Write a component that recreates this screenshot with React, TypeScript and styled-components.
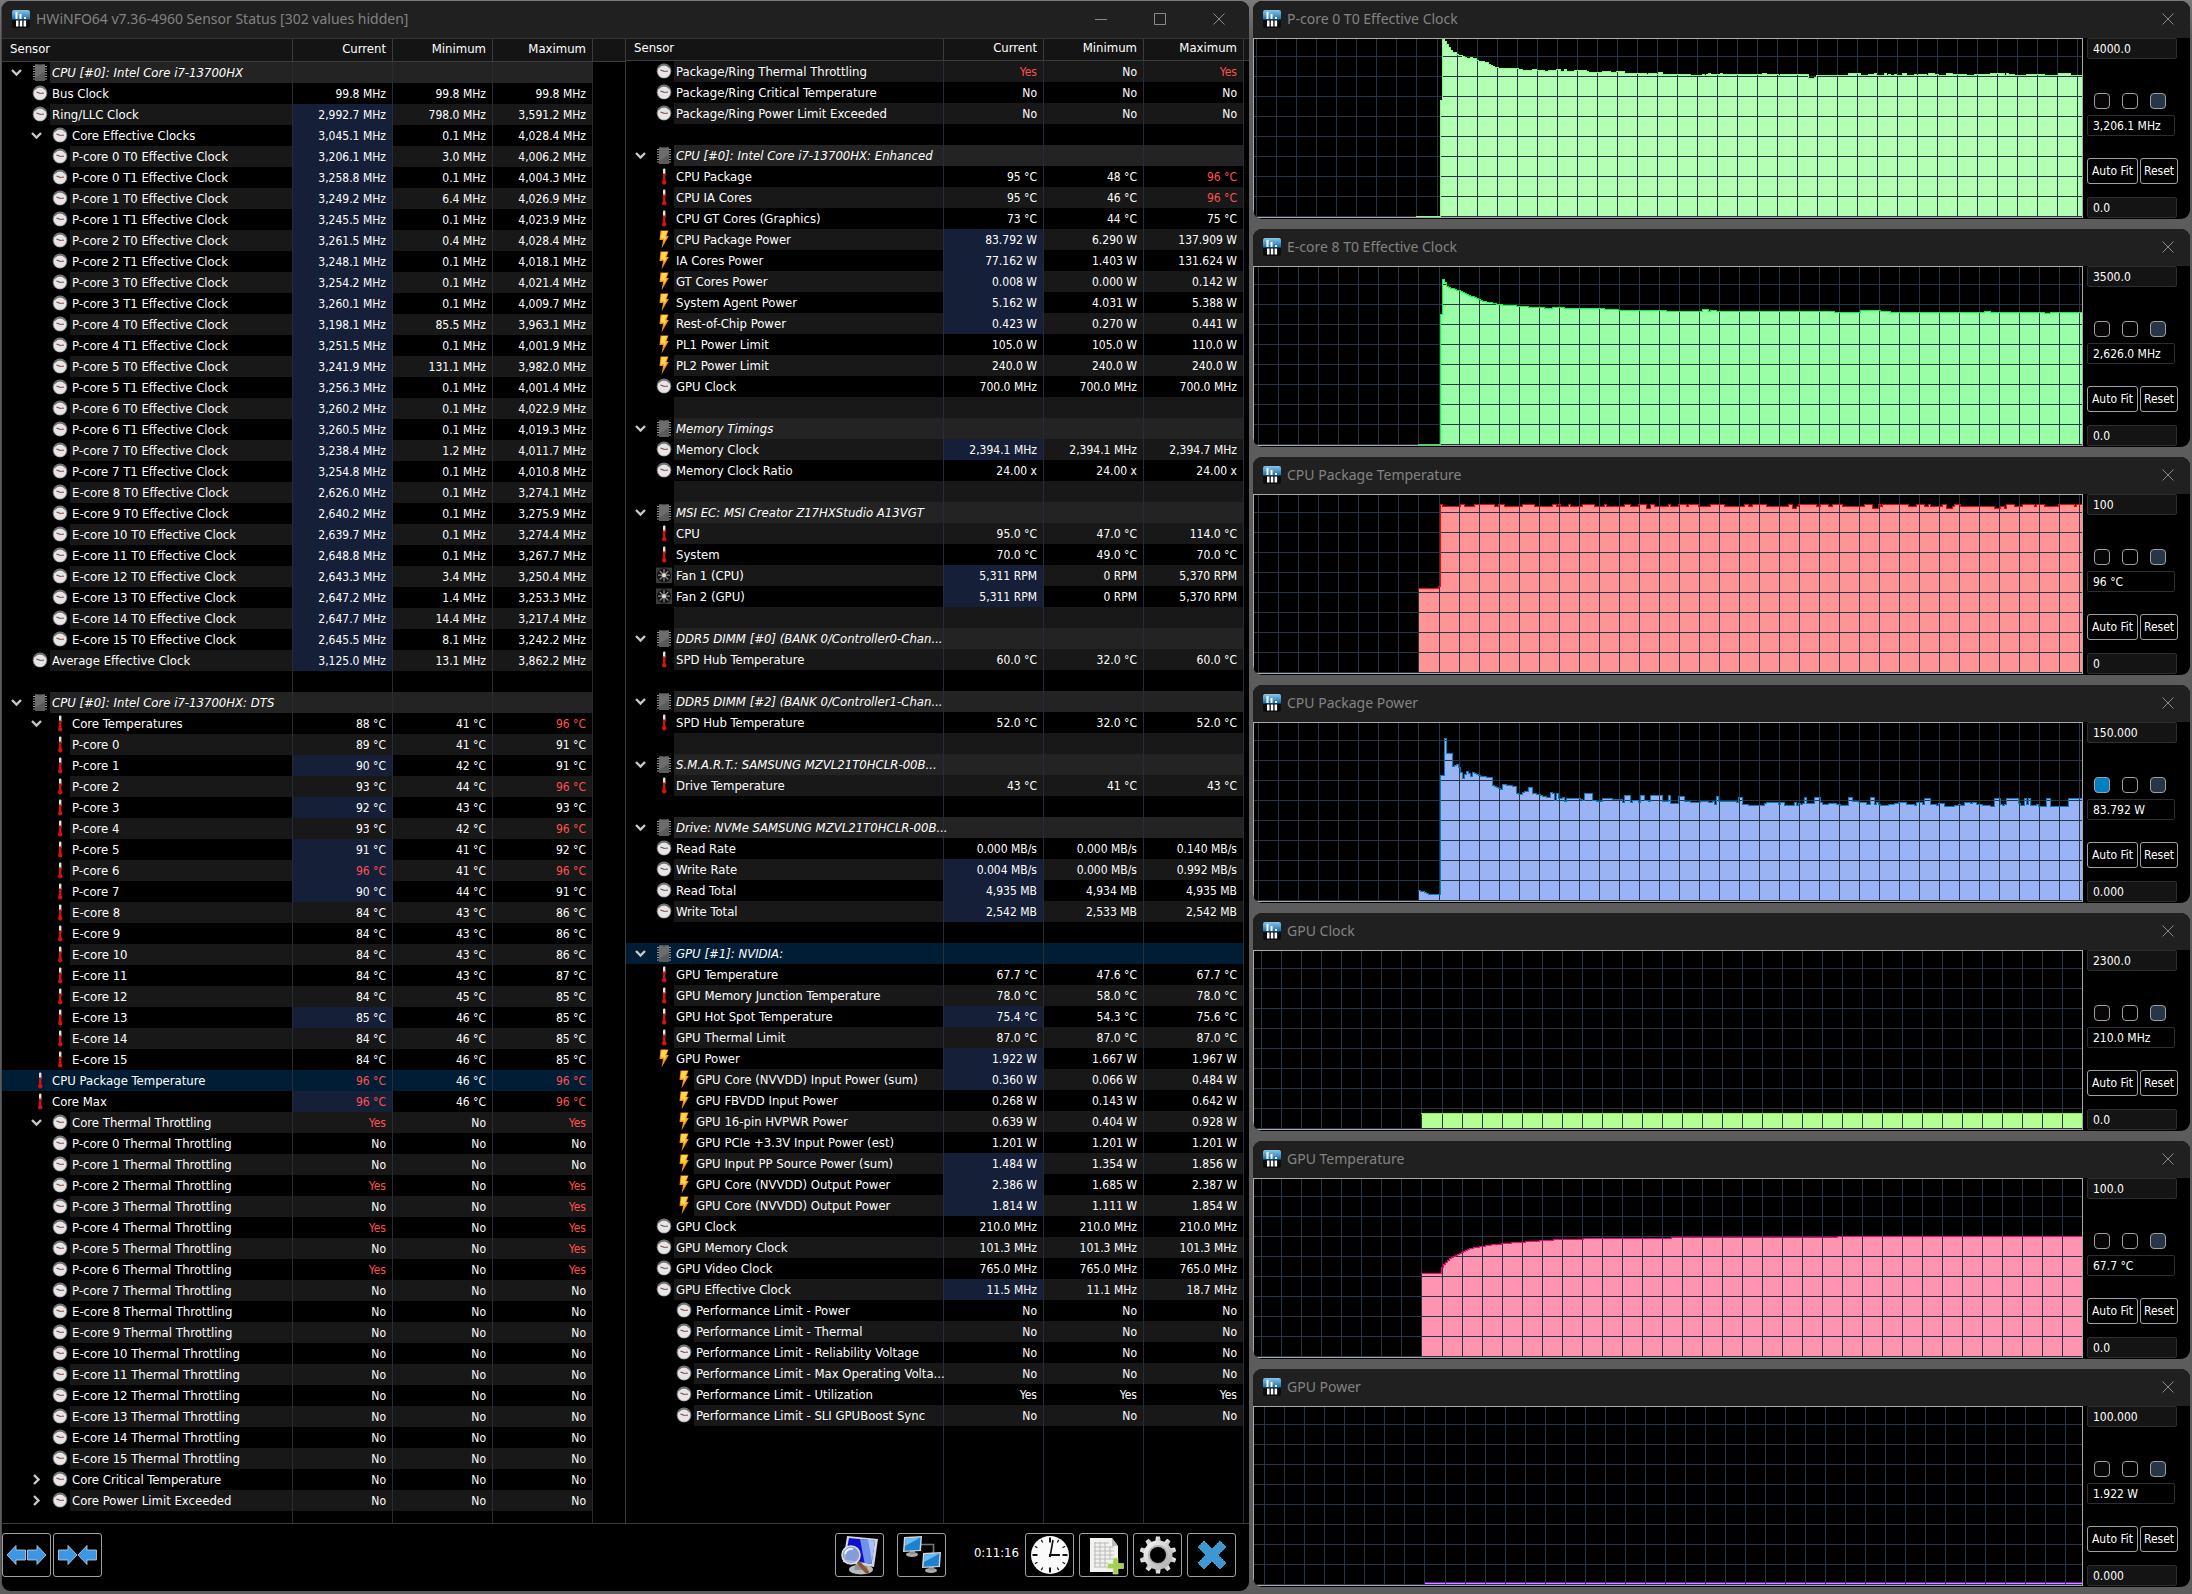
import React, { useId, useState } from 'react';
import styled, { createGlobalStyle, css } from 'styled-components';

const GlobalStyle = createGlobalStyle`
  * { box-sizing: border-box; }
  body {
    margin: 0;
    background: #5c5c5c linear-gradient(#7a7a7a, #5c5c5c 40px);
    color: #fff;
    font: 12px/16px "DejaVu Sans Condensed", "Noto Sans", sans-serif;
  }
  button, input { font: inherit; color: inherit; }
`;

/* ---------- data ---------- */

type IconKind = 'chip' | 'clock' | 'temp' | 'bolt' | 'fan';
type Value = { text: string; alert: boolean };
type RowData = {
  kind: 'blank' | 'group' | 'sensor';
  icon: IconKind;
  level: number;
  chevron: '' | 'open' | 'closed';
  changed: boolean;
  selected: boolean;
  name: string;
  values: Value[];
};

const ICONS: Record<string, IconKind> = { c: 'clock', t: 'temp', b: 'bolt', f: 'fan' };

/*
 * One sensor per line: flags|name|current|minimum|maximum
 *   #  group heading      c t b f  icon       2  indented
 *   v  expanded           >  collapsed        *  value changed
 *   s  selected           !  before a value: over its limit
 */
function parse(source: string): RowData[] {
  return source
    .trim()
    .split('\n')
    .map((line) => {
      const [flags, name = '', ...values] = line.trim().split('|');
      const letter = Object.keys(ICONS).find((k) => flags.includes(k));
      return {
        kind: flags === '-' ? 'blank' : flags.includes('#') ? 'group' : 'sensor',
        icon: letter ? ICONS[letter] : 'chip',
        level: flags.includes('2') ? 1 : 0,
        chevron: flags.includes('#') || flags.includes('v') ? 'open' : flags.includes('>') ? 'closed' : '',
        changed: flags.includes('*'),
        selected: flags.includes('s'),
        name,
        values: values.map((v) => ({ text: v.replace('!', ''), alert: v.startsWith('!') })),
      } as RowData;
    });
}

const LEFT_ROWS = parse(`
#|CPU [#0]: Intel Core i7-13700HX
c|Bus Clock|99.8 MHz|99.8 MHz|99.8 MHz
c*|Ring/LLC Clock|2,992.7 MHz|798.0 MHz|3,591.2 MHz
c2v*|Core Effective Clocks|3,045.1 MHz|0.1 MHz|4,028.4 MHz
c2*|P-core 0 T0 Effective Clock|3,206.1 MHz|3.0 MHz|4,006.2 MHz
c2*|P-core 0 T1 Effective Clock|3,258.8 MHz|0.1 MHz|4,004.3 MHz
c2*|P-core 1 T0 Effective Clock|3,249.2 MHz|6.4 MHz|4,026.9 MHz
c2*|P-core 1 T1 Effective Clock|3,245.5 MHz|0.1 MHz|4,023.9 MHz
c2*|P-core 2 T0 Effective Clock|3,261.5 MHz|0.4 MHz|4,028.4 MHz
c2*|P-core 2 T1 Effective Clock|3,248.1 MHz|0.1 MHz|4,018.1 MHz
c2*|P-core 3 T0 Effective Clock|3,254.2 MHz|0.1 MHz|4,021.4 MHz
c2*|P-core 3 T1 Effective Clock|3,260.1 MHz|0.1 MHz|4,009.7 MHz
c2*|P-core 4 T0 Effective Clock|3,198.1 MHz|85.5 MHz|3,963.1 MHz
c2*|P-core 4 T1 Effective Clock|3,251.5 MHz|0.1 MHz|4,001.9 MHz
c2*|P-core 5 T0 Effective Clock|3,241.9 MHz|131.1 MHz|3,982.0 MHz
c2*|P-core 5 T1 Effective Clock|3,256.3 MHz|0.1 MHz|4,001.4 MHz
c2*|P-core 6 T0 Effective Clock|3,260.2 MHz|0.1 MHz|4,022.9 MHz
c2*|P-core 6 T1 Effective Clock|3,260.5 MHz|0.1 MHz|4,019.3 MHz
c2*|P-core 7 T0 Effective Clock|3,238.4 MHz|1.2 MHz|4,011.7 MHz
c2*|P-core 7 T1 Effective Clock|3,254.8 MHz|0.1 MHz|4,010.8 MHz
c2*|E-core 8 T0 Effective Clock|2,626.0 MHz|0.1 MHz|3,274.1 MHz
c2*|E-core 9 T0 Effective Clock|2,640.2 MHz|0.1 MHz|3,275.9 MHz
c2*|E-core 10 T0 Effective Clock|2,639.7 MHz|0.1 MHz|3,274.4 MHz
c2*|E-core 11 T0 Effective Clock|2,648.8 MHz|0.1 MHz|3,267.7 MHz
c2*|E-core 12 T0 Effective Clock|2,643.3 MHz|3.4 MHz|3,250.4 MHz
c2*|E-core 13 T0 Effective Clock|2,647.2 MHz|1.4 MHz|3,253.3 MHz
c2*|E-core 14 T0 Effective Clock|2,647.7 MHz|14.4 MHz|3,217.4 MHz
c2*|E-core 15 T0 Effective Clock|2,645.5 MHz|8.1 MHz|3,242.2 MHz
c*|Average Effective Clock|3,125.0 MHz|13.1 MHz|3,862.2 MHz
-
#|CPU [#0]: Intel Core i7-13700HX: DTS
t2v|Core Temperatures|88 °C|41 °C|!96 °C
t2|P-core 0|89 °C|41 °C|91 °C
t2*|P-core 1|90 °C|42 °C|91 °C
t2|P-core 2|93 °C|44 °C|!96 °C
t2*|P-core 3|92 °C|43 °C|93 °C
t2|P-core 4|93 °C|42 °C|!96 °C
t2*|P-core 5|91 °C|41 °C|92 °C
t2*|P-core 6|!96 °C|41 °C|!96 °C
t2*|P-core 7|90 °C|44 °C|91 °C
t2|E-core 8|84 °C|43 °C|86 °C
t2|E-core 9|84 °C|43 °C|86 °C
t2|E-core 10|84 °C|43 °C|86 °C
t2|E-core 11|84 °C|43 °C|87 °C
t2|E-core 12|84 °C|45 °C|85 °C
t2*|E-core 13|85 °C|46 °C|85 °C
t2|E-core 14|84 °C|46 °C|85 °C
t2|E-core 15|84 °C|46 °C|85 °C
ts|CPU Package Temperature|!96 °C|46 °C|!96 °C
t*|Core Max|!96 °C|46 °C|!96 °C
c2v|Core Thermal Throttling|!Yes|No|!Yes
c2|P-core 0 Thermal Throttling|No|No|No
c2|P-core 1 Thermal Throttling|No|No|No
c2|P-core 2 Thermal Throttling|!Yes|No|!Yes
c2|P-core 3 Thermal Throttling|No|No|!Yes
c2|P-core 4 Thermal Throttling|!Yes|No|!Yes
c2|P-core 5 Thermal Throttling|No|No|!Yes
c2|P-core 6 Thermal Throttling|!Yes|No|!Yes
c2|P-core 7 Thermal Throttling|No|No|No
c2|E-core 8 Thermal Throttling|No|No|No
c2|E-core 9 Thermal Throttling|No|No|No
c2|E-core 10 Thermal Throttling|No|No|No
c2|E-core 11 Thermal Throttling|No|No|No
c2|E-core 12 Thermal Throttling|No|No|No
c2|E-core 13 Thermal Throttling|No|No|No
c2|E-core 14 Thermal Throttling|No|No|No
c2|E-core 15 Thermal Throttling|No|No|No
c2>|Core Critical Temperature|No|No|No
c2>|Core Power Limit Exceeded|No|No|No
`);

const RIGHT_ROWS = parse(`
c|Package/Ring Thermal Throttling|!Yes|No|!Yes
c|Package/Ring Critical Temperature|No|No|No
c|Package/Ring Power Limit Exceeded|No|No|No
-
#|CPU [#0]: Intel Core i7-13700HX: Enhanced
t|CPU Package|95 °C|48 °C|!96 °C
t|CPU IA Cores|95 °C|46 °C|!96 °C
t|CPU GT Cores (Graphics)|73 °C|44 °C|75 °C
b*|CPU Package Power|83.792 W|6.290 W|137.909 W
b*|IA Cores Power|77.162 W|1.403 W|131.624 W
b*|GT Cores Power|0.008 W|0.000 W|0.142 W
b*|System Agent Power|5.162 W|4.031 W|5.388 W
b*|Rest-of-Chip Power|0.423 W|0.270 W|0.441 W
b|PL1 Power Limit|105.0 W|105.0 W|110.0 W
b|PL2 Power Limit|240.0 W|240.0 W|240.0 W
c|GPU Clock|700.0 MHz|700.0 MHz|700.0 MHz
-
#|Memory Timings
c*|Memory Clock|2,394.1 MHz|2,394.1 MHz|2,394.7 MHz
c|Memory Clock Ratio|24.00 x|24.00 x|24.00 x
-
#|MSI EC: MSI Creator Z17HXStudio A13VGT
t|CPU|95.0 °C|47.0 °C|114.0 °C
t|System|70.0 °C|49.0 °C|70.0 °C
f*|Fan 1 (CPU)|5,311 RPM|0 RPM|5,370 RPM
f*|Fan 2 (GPU)|5,311 RPM|0 RPM|5,370 RPM
-
#|DDR5 DIMM [#0] (BANK 0/Controller0-Chan...
t|SPD Hub Temperature|60.0 °C|32.0 °C|60.0 °C
-
#|DDR5 DIMM [#2] (BANK 0/Controller1-Chan...
t|SPD Hub Temperature|52.0 °C|32.0 °C|52.0 °C
-
#|S.M.A.R.T.: SAMSUNG MZVL21T0HCLR-00B...
t|Drive Temperature|43 °C|41 °C|43 °C
-
#|Drive: NVMe SAMSUNG MZVL21T0HCLR-00B...
c|Read Rate|0.000 MB/s|0.000 MB/s|0.140 MB/s
c*|Write Rate|0.004 MB/s|0.000 MB/s|0.992 MB/s
c*|Read Total|4,935 MB|4,934 MB|4,935 MB
c*|Write Total|2,542 MB|2,533 MB|2,542 MB
-
#s|GPU [#1]: NVIDIA:
t|GPU Temperature|67.7 °C|47.6 °C|67.7 °C
t|GPU Memory Junction Temperature|78.0 °C|58.0 °C|78.0 °C
t*|GPU Hot Spot Temperature|75.4 °C|54.3 °C|75.6 °C
t|GPU Thermal Limit|87.0 °C|87.0 °C|87.0 °C
b*|GPU Power|1.922 W|1.667 W|1.967 W
b2*|GPU Core (NVVDD) Input Power (sum)|0.360 W|0.066 W|0.484 W
b2|GPU FBVDD Input Power|0.268 W|0.143 W|0.642 W
b2|GPU 16-pin HVPWR Power|0.639 W|0.404 W|0.928 W
b2|GPU PCIe +3.3V Input Power (est)|1.201 W|1.201 W|1.201 W
b2*|GPU Input PP Source Power (sum)|1.484 W|1.354 W|1.856 W
b2*|GPU Core (NVVDD) Output Power|2.386 W|1.685 W|2.387 W
b2*|GPU Core (NVVDD) Output Power|1.814 W|1.111 W|1.854 W
c|GPU Clock|210.0 MHz|210.0 MHz|210.0 MHz
c|GPU Memory Clock|101.3 MHz|101.3 MHz|101.3 MHz
c|GPU Video Clock|765.0 MHz|765.0 MHz|765.0 MHz
c*|GPU Effective Clock|11.5 MHz|11.1 MHz|18.7 MHz
c2|Performance Limit - Power|No|No|No
c2|Performance Limit - Thermal|No|No|No
c2|Performance Limit - Reliability Voltage|No|No|No
c2|Performance Limit - Max Operating Volta...|No|No|No
c2|Performance Limit - Utilization|Yes|Yes|Yes
c2|Performance Limit - SLI GPUBoost Sync|No|No|No
`);

type GraphData = {
  title: string;
  top: string;
  value: string;
  bottom: string;
  fill: string;
  line: string;
  start: number;
  points: [number, number][];
  noise?: { size: number; chance: number; up?: boolean };
  lit?: boolean;
};

const GRAPHS: GraphData[] = [
  {
    title: 'P-core 0 T0 Effective Clock', top: '4000.0', value: '3,206.1 MHz', bottom: '0.0',
    fill: '#b3ffb3', line: '#80ff80', start: 162,
    points: [[162, 177], [184, 177], [185, 61], [187, 61], [188, 0], [189, 0], [191, 4], [194, 8], [198, 13], [204, 16], [212, 19], [228, 22], [244, 29], [290, 31], [340, 33], [420, 35], [553, 35], [554, 39], [559, 39], [561, 36], [700, 35], [828, 36]],
    noise: { size: 1, chance: 0.35 },
  },
  {
    title: 'E-core 8 T0 Effective Clock', top: '3500.0', value: '2,626.0 MHz', bottom: '0.0',
    fill: '#99ffa6', line: '#00ff40', start: 164,
    points: [[164, 177], [184, 177], [185, 47], [187, 47], [188, 12], [189, 12], [191, 18], [194, 20], [206, 24], [218, 29], [230, 34], [246, 37], [286, 40], [330, 41], [400, 43], [500, 44], [640, 45], [828, 45]],
    noise: { size: 1, chance: 0.12 },
  },
  {
    title: 'CPU Package Temperature', top: '100', value: '96 °C', bottom: '0',
    fill: '#ff9494', line: '#ff0000', start: 164,
    points: [[164, 93], [182, 93], [184, 91], [185, 9], [187, 9], [188, 11], [828, 11]],
    noise: { size: 2, chance: 0.45, up: true },
  },
  {
    title: 'CPU Package Power', top: '150.000', value: '83.792 W', bottom: '0.000',
    fill: '#99b3f5', line: '#0080c0', start: 164,
    points: [[164, 167], [170, 169], [174, 171], [184, 171], [185, 52], [188, 52], [189, 15], [191, 15], [192, 30], [197, 30], [198, 43], [203, 41], [206, 47], [208, 54], [212, 48], [216, 53], [224, 58], [236, 60], [245, 66], [256, 68], [280, 70], [300, 76], [320, 75], [345, 76], [370, 78], [420, 78], [500, 80], [640, 80], [828, 81]],
    noise: { size: 4, chance: 0.45 },
    lit: true,
  },
  {
    title: 'GPU Clock', top: '2300.0', value: '210.0 MHz', bottom: '0.0',
    fill: '#b3ff94', line: '#80ff00', start: 167,
    points: [[167, 162], [828, 162]],
  },
  {
    title: 'GPU Temperature', top: '100.0', value: '67.7 °C', bottom: '0.0',
    fill: '#ff94b0', line: '#ff0080', start: 167,
    points: [[167, 94], [186, 94], [187, 88], [190, 84], [194, 80], [198, 77], [208, 72], [216, 69], [232, 66], [250, 64], [276, 62], [306, 60], [350, 59], [414, 59], [416, 58], [580, 58], [582, 57], [828, 57]],
  },
  {
    title: 'GPU Power', top: '100.000', value: '1.922 W', bottom: '0.000',
    fill: '#cc99ff', line: '#8000ff', start: 170,
    points: [[170, 175], [828, 175]],
  },
];

/* ---------- drawings ---------- */

const IconBox = styled.svg`
  display: block;
  flex: none;
`;

function AppIcon() {
  const id = useId();
  return (
    <IconBox width="18" height="18" viewBox="0 0 18 18" aria-hidden="true">
      <defs>
        <linearGradient id={id} x1="0" y1="0" x2="0" y2="1">
          <stop offset="0" stopColor="#8cc4e6" />
          <stop offset="1" stopColor="#1470ae" />
        </linearGradient>
      </defs>
      <rect width="18" height="18" rx="2" fill="#0c0c0c" />
      <path d="M0 9.500V2a2 2 0 0 1 2-2h14a2 2 0 0 1 2 2v7.500z" fill={`url(#${id})`} />
      <path d="M3.500 2h2v7h-2zM7.500 4h2v5h-2zM12 7h2v2h-2zM4 10.500h2.500v6H4zM7.800 10.500h2.500v6H7.800zM11.600 10.500h2.500v6h-2.500z" fill="#fff" />
    </IconBox>
  );
}

function SensorIcon({ kind }: { kind: IconKind }) {
  return (
    <IconBox width="16" height="19" viewBox="0 0 16 19" aria-hidden="true">
      {kind === 'chip' && (
        <>
          <path d="M1 3.500h14M1 6h14M1 8.500h14M1 11h14M1 13.500h14M1 16h14" stroke="#9a9a9a" />
          <rect x="3" y="1.500" width="10" height="16.500" fill="#5a5a5a" />
          <path d="M3 1.500h10v7L3 15z" fill="#6c6c6c" />
          <path d="M6.500 1.500h3l-1.500 1z" fill="#333" />
        </>
      )}
      {kind === 'clock' && (
        <>
          <circle cx="8" cy="9" r="7.400" fill="#7c7c7c" />
          <circle cx="8" cy="9.500" r="6.300" fill="#e6e6e6" />
          <path d="M3 5.500a6.200 6.200 0 0 1 10 0" fill="none" stroke="#6c6c6c" strokeWidth="1.200" />
          <path d="M4.500 8l4 1.500" stroke="#555" strokeWidth="1.200" />
          <path d="M8 9.500l4-.3" stroke="#a85c48" strokeWidth="1.200" />
        </>
      )}
      {kind === 'temp' && (
        <>
          <rect x="7" y="1.500" width="2.400" height="7" rx="1" fill="#e8e4e2" />
          <rect x="7" y="6.500" width="2.400" height="9" fill="#d81010" />
          <circle cx="8.200" cy="15.300" r="2.200" fill="#d81010" />
        </>
      )}
      {kind === 'bolt' && (
        <>
          <path d="M4.500 .5h8L10.500 6h2.300L5.500 18.500l1.600-8.500H3.500z" fill="#f88e12" />
          <path d="M5.500 1h6L9 6.500h2L7.500 12l.8-3.500H4.500z" fill="#ffd84a" />
        </>
      )}
      {kind === 'fan' && (
        <>
          <rect y="1.500" width="16" height="15.500" fill="#3c3c3c" />
          <circle cx="8" cy="9.200" r="7" fill="#111" />
          <path d="M8 3v12.500M2 9.200h12M3.700 5l8.600 8.500M12.300 5l-8.600 8.500" stroke="#8c8c8c" strokeWidth="1.200" />
          <circle cx="8" cy="9.200" r="2" fill="#e6d8d8" />
        </>
      )}
    </IconBox>
  );
}

function ArrowsIcon({ inward = false }: { inward?: boolean }) {
  const left = 'M1 11 L10 1.500 V6 H19.500 V16 H10 V20.500 Z';
  const right = 'M40 11 L31 1.500 V6 H21.500 V16 H31 V20.500 Z';
  return (
    <IconBox width="41" height="22" viewBox="0 0 41 22" aria-hidden="true">
      <g fill="#3c97e4" stroke="#c9d6e2" strokeWidth="0.800">
        <path d={left} transform={inward ? 'translate(20 0)' : undefined} />
        <path d={right} transform={inward ? 'translate(-20 0)' : undefined} />
      </g>
    </IconBox>
  );
}

function MagnifierIcon() {
  return (
    <IconBox width="40" height="40" viewBox="0 0 40 40" aria-hidden="true">
      <ellipse cx="21" cy="34.500" rx="12" ry="5" fill="#b9bcbc" />
      <path d="M16 28h10l2 7H14z" fill="#8f9292" />
      <path d="M7 1l31 3-4 28L3 27z" fill="#d5d8da" />
      <path d="M9 3l26 2.500-3.500 23.500L5 24.500z" fill="#1010c8" />
      <path d="M20 4l15 1.500-3.500 23.500-7-1.200z" fill="#6f92ee" />
      <path d="M28 5l7 .5-3 20z" fill="#a9c0f8" />
      <path d="M19 28l8 9" stroke="#8a5632" strokeWidth="4" strokeLinecap="round" />
      <circle cx="11" cy="20" r="9" fill="#9db4dc" fillOpacity="0.850" stroke="#d9dee4" strokeWidth="1.600" />
      <path d="M5 19a6.500 6.500 0 0 1 8-5" stroke="#e8f0fc" strokeWidth="2" fill="none" />
    </IconBox>
  );
}

function NetworkIcon() {
  return (
    <IconBox width="40" height="40" viewBox="0 0 40 40" aria-hidden="true">
      <path d="M18 9.500h13.500V19" fill="none" stroke="#777" strokeWidth="1.600" />
      {[0, 1].map((i) => (
        <g key={i} transform={`translate(${i * 19} ${i * 16})`}>
          <ellipse cx="10" cy="19.500" rx="6" ry="2.500" fill="#a9acae" />
          <path d="M8 15h5v4H8z" fill="#8a8d90" />
          <path d="M2 2l18-1-1 15L1 17z" fill="#d3d6d8" />
          <path d="M3.500 3.500L18.500 2.500l-1 12.500-15 .8z" fill="#1b82d2" />
          <path d="M3.500 3.500L18.500 2.500 3 11z" fill="#74baf0" />
        </g>
      ))}
    </IconBox>
  );
}

function ClockFaceIcon() {
  return (
    <IconBox width="40" height="40" viewBox="0 0 40 40" aria-hidden="true">
      <circle cx="20" cy="20" r="19" fill="#fafafa" />
      {Array.from({ length: 12 }, (_, i) => (
        <path key={i} d={i % 3 ? 'M20 2.500v3' : 'M20 2.500v5'} stroke="#111" strokeWidth={i % 3 ? 1.2 : 2} transform={`rotate(${i * 30} 20 20)`} />
      ))}
      <path d="M20 22V20h10" stroke="#111" strokeWidth="2" fill="none" />
      <path d="M20 22l3-17" stroke="#111" strokeWidth="1.600" />
    </IconBox>
  );
}

function SheetIcon() {
  return (
    <IconBox width="40" height="40" viewBox="0 0 40 40" aria-hidden="true">
      <path d="M6 3h22l6 8v26H6z" fill="#f2f2f0" />
      <path d="M28 3l6 8h-6z" fill="#bdbdbd" />
      <path d="M10 8h15M10 12h20M10 16h20M10 20h20M10 24h20M10 28h14M10 32h14M11 7v25M16 7v25M21 7v25M26 12v12" stroke="#b9bcba" fill="none" />
      <path d="M29 23h5v5.500h5.500v5H34V39h-5v-5.500h-5.500v-5H29z" fill="#a5cf52" stroke="#dcefb4" strokeWidth="0.600" />
    </IconBox>
  );
}

function GearIcon() {
  const id = useId();
  return (
    <IconBox width="40" height="40" viewBox="0 0 40 40" aria-hidden="true">
      <defs>
        <linearGradient id={id} x1="0" y1="0" x2="1" y2="1">
          <stop offset="0" stopColor="#fafafa" />
          <stop offset="1" stopColor="#a9a9a9" />
        </linearGradient>
      </defs>
      <g fill={`url(#${id})`}>
        {Array.from({ length: 10 }, (_, i) => (
          <path key={i} d="M17 8l1-6.500h4L23 8z" transform={`rotate(${i * 36} 20 20)`} />
        ))}
        <circle cx="20" cy="20" r="14.500" />
      </g>
      <circle cx="20" cy="20" r="10" fill="#b4b4b4" />
      <circle cx="20" cy="20" r="8" fill="#000" />
    </IconBox>
  );
}

function CrossIcon() {
  return (
    <IconBox width="32" height="32" viewBox="0 0 32 32" aria-hidden="true">
      <path d="M8 2l8 8 8-8 6 6-8 8 8 8-6 6-8-8-8 8-6-6 8-8-8-8z" fill="#3c97d4" stroke="#63b2e4" strokeDasharray="2 1" />
    </IconBox>
  );
}

function WindowGlyph({ kind }: { kind: 'min' | 'max' | 'close' }) {
  const shape = { min: 'M0 6.500h12', max: 'M.5.500h11v11H.5z', close: 'M.5.500l11 11M11.500.500l-11 11' }[kind];
  return (
    <IconBox width="12" height="12" viewBox="0 0 12 12" aria-hidden="true">
      <path d={shape} fill="none" stroke="#8a8a8a" />
    </IconBox>
  );
}

/* ---------- shared window frame ---------- */

const Page = styled.div`
  display: grid;
  grid-template-columns: minmax(0, 1248fr) minmax(0, 937fr);
  column-gap: 4px;
  min-height: 100vh;
  padding: 1px 2px 3px 1px;
`;

const Frame = styled.section`
  display: flex;
  flex-direction: column;
  min-width: 0;
  overflow: hidden;
  border-radius: 9px;
  background: #000;
`;

const TitleBar = styled.header`
  display: flex;
  align-items: center;
  flex: none;
  gap: 6px;
  height: 37px;
  padding: 0 16px 2px 10px;
  background: #202020;
`;

const Title = styled.h1`
  flex: 1;
  margin: 0;
  color: #838383;
  font: 14px/20px "Noto Sans", sans-serif;
`;

const TitleButton = styled.button`
  display: grid;
  place-items: center;
  width: 12px;
  height: 24px;
  padding: 0;
  border: 0;
  background: none;
`;

const TitleButtons = styled.div<{ $inset?: boolean }>`
  display: flex;
  gap: 47px;
  padding-right: ${(p) => (p.$inset ? 8 : 0)}px;
`;

/* ---------- sensor tables ---------- */

const MainFrame = styled(Frame)`
  border-left: 1px solid #4a4a4a;
`;

const Panes = styled.div`
  display: flex;
  flex: 1;
  border-top: 1px solid #343434;
  border-bottom: 1px solid #3a3a3a;
`;

const Pane = styled.div`
  display: grid;
  flex: 1;
  min-width: 0;

  & + & {
    border-left: 1px solid #3a3a3a;
  }
`;

const Table = styled.table`
  width: 100%;
  height: 100%;
  table-layout: fixed;
  border-collapse: separate;
  border-spacing: 0;
`;

const HeadRow = styled.tr<{ $height: number }>`
  height: ${(p) => p.$height}px;
`;

const HeadCell = styled.th<{ $first?: boolean }>`
  padding: 0 6px 3px 8px;
  border-right: 1px solid #3c3c3c;
  border-bottom: 1px solid #3c3c3c;
  background: #141414;
  font-weight: 400;
  font-size: 13px;
  text-align: ${(p) => (p.$first ? 'left' : 'right')};

  &:last-child {
    border-right: 0;
  }
`;

type Tone = { $group?: boolean; $odd?: boolean; $selected?: boolean; $changed?: boolean };

const tone = css<Tone>`
  background: ${(p) =>
    p.$selected ? '#001d36' : p.$changed ? '#152038' : p.$group ? '#232323' : p.$odd ? '#181818' : '#000'};
`;

const Row = styled.tr`
  height: 21px;
`;

const NameCell = styled.td<{ $selected?: boolean }>`
  padding: 0;
  border-right: 1px solid #262c38;
  background: ${(p) => (p.$selected ? '#001d36' : '#000')};
`;

const NameLine = styled.div<{ $level: number }>`
  display: flex;
  align-items: center;
  height: 21px;
  padding-left: ${(p) => (p.$level ? 29 : 9)}px;
`;

const Chevron = styled.button<{ $state: string }>`
  display: grid;
  place-items: center;
  width: 11px;
  height: 21px;
  margin-right: 10px;
  padding: 0;
  border: 0;
  background: none;
  visibility: ${(p) => (p.$state ? 'visible' : 'hidden')};
`;

const Label = styled.span<Tone>`
  flex: 1;
  min-width: 0;
  height: 21px;
  margin-left: 2px;
  padding-left: 2px;
  font-size: 13px;
  font-style: ${(p) => (p.$group ? 'italic' : 'normal')};
  line-height: 21px;
  white-space: nowrap;
  ${tone}
`;

const ValueCell = styled.td<Tone & { $alert?: boolean }>`
  padding: 0 6px 0 0;
  border-right: 1px solid #262c38;
  color: ${(p) => (p.$alert ? '#ff5050' : '#fff')};
  text-align: right;
  white-space: nowrap;
  ${tone}
`;

const PlainCell = styled.td<{ $line?: boolean }>`
  padding: 0;
  border-right: ${(p) => (p.$line ? '1px solid #262c38' : '0')};
`;

function SensorTable({ rows, nameWidth, headHeight, caption }: { rows: RowData[]; nameWidth: number; headHeight: number; caption: string }) {
  return (
    <Table aria-label={caption}>
      <colgroup>
        <col width={nameWidth} />
        <col width="100" />
        <col width="100" />
        <col width="100" />
        <col />
      </colgroup>
      <thead>
        <HeadRow $height={headHeight}>
          <HeadCell $first scope="col">Sensor</HeadCell>
          <HeadCell scope="col">Current</HeadCell>
          <HeadCell scope="col">Minimum</HeadCell>
          <HeadCell scope="col">Maximum</HeadCell>
          <HeadCell aria-hidden="true" />
        </HeadRow>
      </thead>
      <tbody>
        {rows.map((row, i) => {
          const shade = { $group: row.kind === 'group', $odd: i % 2 === 0, $selected: row.selected };
          return (
            <Row key={i}>
              <NameCell $selected={row.selected}>
                <NameLine $level={row.level}>
                  <Chevron $state={row.chevron} aria-label={row.chevron === 'closed' ? 'Expand' : 'Collapse'}>
                    <IconBox width="11" height="11" viewBox="0 0 11 11" aria-hidden="true">
                      <path d={row.chevron === 'closed' ? 'M3 1l4.500 4.500L3 10' : 'M1 3l4.500 4.500L10 3'} fill="none" stroke="#c8c8c8" strokeWidth="2.400" />
                    </IconBox>
                  </Chevron>
                  {row.kind === 'blank' ? <IconBox width="16" height="19" /> : <SensorIcon kind={row.icon} />}
                  <Label {...shade}>{row.name}</Label>
                </NameLine>
              </NameCell>
              {[0, 1, 2].map((col) => (
                <ValueCell key={col} {...shade} $changed={col === 0 && row.changed} $alert={row.values[col]?.alert}>
                  {row.values[col]?.text}
                </ValueCell>
              ))}
              <PlainCell />
            </Row>
          );
        })}
        <tr>
          <PlainCell $line />
          <PlainCell $line />
          <PlainCell $line />
          <PlainCell $line />
          <PlainCell />
        </tr>
      </tbody>
    </Table>
  );
}

/* ---------- toolbar ---------- */

const ToolBar = styled.footer`
  display: flex;
  align-items: center;
  justify-content: space-between;
  height: 67px;
  padding: 0 13px 5px 0;
`;

const ToolGroup = styled.div<{ $gap: number }>`
  display: flex;
  align-items: center;
  gap: ${(p) => p.$gap}px;
`;

const ToolButton = styled.button`
  display: grid;
  place-items: center;
  width: 49px;
  height: 44px;
  padding: 0;
  border: 1px solid #a0a0a0;
  border-radius: 3px;
  background: #000;
`;

const Elapsed = styled.time`
  width: 69px;
  padding: 0 1px 4px 0;
  font-size: 13px;
  text-align: right;
`;

/* ---------- graphs ---------- */

const GraphColumn = styled.div`
  display: flex;
  flex-direction: column;
  gap: 10px;
  min-width: 0;
`;

const GraphBody = styled.div`
  display: flex;
  height: 181px;
  padding-bottom: 1px;
`;

const Plot = styled.svg`
  display: block;
  flex: 1;
  min-width: 0;
  height: 180px;
  border: 1px solid #a8a8a8;
`;

const Side = styled.div`
  display: flex;
  flex-direction: column;
  flex: none;
  width: 107px;
  padding-left: 4px;
`;

const Field = styled.input<{ $live?: boolean }>`
  width: ${(p) => (p.$live ? 88 : 90)}px;
  height: 21px;
  padding: 0 5px;
  border: 1px solid #2e2e2e;
  border-radius: 2px;
  background: ${(p) => (p.$live ? '#000' : '#141414')};
  outline: 0;
`;

const Checks = styled.div`
  display: flex;
  gap: 12px;
  margin: 34px 0 6px 7px;
`;

const Check = styled.input<{ $fill: string }>`
  width: 16px;
  height: 16px;
  margin: 0;
  appearance: none;
  border: 1px solid #a0a0a0;
  border-radius: 4px;
  background: ${(p) => p.$fill};
`;

const GraphButtons = styled.div`
  display: flex;
  gap: 2px;
  margin: 22px 0 13px;
`;

const GraphButton = styled.button<{ $width: number }>`
  width: ${(p) => p.$width}px;
  height: 26px;
  padding: 0;
  border: 1px solid #a0a0a0;
  border-radius: 3px;
  background: #000;
  white-space: nowrap;
`;

const PLOT_WIDTH = 828;
const PLOT_HEIGHT = 178;
const SAMPLE = 2;

/** Stepped outline through the key points, one sample every two units. */
function outline({ points, noise, start }: GraphData) {
  let seed = start * 7919;
  const random = () => {
    seed = (seed * 1103515245 + 12345) % 2147483648;
    return seed / 2147483648;
  };
  let offset = 0;
  let d = '';
  for (let x = start; x <= PLOT_WIDTH; x += SAMPLE) {
    const next = points.findIndex(([px]) => px >= x);
    const [x1, y1] = points[Math.max(next, 0)];
    const [x0, y0] = points[Math.max(next - 1, 0)];
    const base = x1 === x0 ? y1 : y0 + ((y1 - y0) * (x - x0)) / (x1 - x0);
    if (noise && x > 196) {
      if (noise.up) {
        if (random() < noise.chance) offset = random() < 0.4 ? -noise.size : random() < 0.1 ? noise.size : 0;
      } else if (random() < noise.chance) {
        offset = random() < 0.2 ? -noise.size * 1.4 : (random() - 0.4) * noise.size;
      }
    }
    const y = Math.round(base + offset) + 0.5;
    d += `${d ? 'V' + y : `M${x} ${y}`}H${x + SAMPLE}`;
  }
  return d;
}

function Graph({ data }: { data: GraphData }) {
  const { title, start, fill, line } = data;
  const [top, setTop] = useState(data.top);
  const [bottom, setBottom] = useState(data.bottom);
  const path = outline(data);
  const columns: number[] = [];
  for (let x = start; x >= 0; x -= 20) columns.push(x);
  for (let x = start + 21; x <= PLOT_WIDTH; x += 20) columns.push(x);
  const rows = Array.from({ length: 9 }, (_, i) => 17.5 + i * 20);
  return (
    <Frame aria-label={title}>
      <TitleBar>
        <AppIcon />
        <Title as="h2">{title}</Title>
        <TitleButtons>
          <TitleButton aria-label="Close"><WindowGlyph kind="close" /></TitleButton>
        </TitleButtons>
      </TitleBar>
      <GraphBody>
        <Plot viewBox={`0 0 ${PLOT_WIDTH} ${PLOT_HEIGHT}`} preserveAspectRatio="none" shapeRendering="crispEdges" role="img" aria-label={title}>
          <path d={`${path}V${PLOT_HEIGHT}H${start}Z`} fill={fill} />
          <path d={columns.map((x) => `M${x + 0.5} 0V${PLOT_HEIGHT}`).join('') + rows.map((y) => `M0 ${y}H${PLOT_WIDTH}`).join('')} stroke="#263646" />
          <path d={path} fill="none" stroke={line} />
        </Plot>
        <Side>
          <Field aria-label={`${title} upper bound`} value={top} onChange={(e) => setTop(e.target.value)} />
          <Checks>
            <Check type="checkbox" aria-label="Line colour" $fill={data.lit ? '#0080c0' : '#080606'} defaultChecked={data.lit} />
            <Check type="checkbox" aria-label="Background colour" $fill="#000" />
            <Check type="checkbox" aria-label="Grid colour" $fill="#263646" />
          </Checks>
          <Field $live readOnly aria-label={`${title} current value`} value={data.value} />
          <GraphButtons>
            <GraphButton $width={51}>Auto Fit</GraphButton>
            <GraphButton $width={38}>Reset</GraphButton>
          </GraphButtons>
          <Field aria-label={`${title} lower bound`} value={bottom} onChange={(e) => setBottom(e.target.value)} />
        </Side>
      </GraphBody>
    </Frame>
  );
}

export default function App() {
  return (
    <>
      <GlobalStyle />
      <Page>
        <MainFrame>
          <TitleBar>
            <AppIcon />
            <Title>HWiNFO64 v7.36-4960 Sensor Status [302 values hidden]</Title>
            <TitleButtons $inset>
              <TitleButton aria-label="Minimize"><WindowGlyph kind="min" /></TitleButton>
              <TitleButton aria-label="Maximize"><WindowGlyph kind="max" /></TitleButton>
              <TitleButton aria-label="Close"><WindowGlyph kind="close" /></TitleButton>
            </TitleButtons>
          </TitleBar>
          <Panes>
            <Pane><SensorTable rows={LEFT_ROWS} nameWidth={291} headHeight={23} caption="CPU sensors" /></Pane>
            <Pane><SensorTable rows={RIGHT_ROWS} nameWidth={318} headHeight={22} caption="Package, memory, drive and GPU sensors" /></Pane>
          </Panes>
          <ToolBar>
            <ToolGroup $gap={2}>
              <ToolButton aria-label="Expand columns"><ArrowsIcon /></ToolButton>
              <ToolButton aria-label="Shrink columns"><ArrowsIcon inward /></ToolButton>
            </ToolGroup>
            <ToolGroup $gap={5}>
              <ToolGroup $gap={13}>
                <ToolButton aria-label="Find sensor"><MagnifierIcon /></ToolButton>
                <ToolButton aria-label="Remote sensors"><NetworkIcon /></ToolButton>
              </ToolGroup>
              <Elapsed>0:11:16</Elapsed>
              <ToolButton aria-label="Reset clock"><ClockFaceIcon /></ToolButton>
              <ToolButton aria-label="Log to file"><SheetIcon /></ToolButton>
              <ToolButton aria-label="Settings"><GearIcon /></ToolButton>
              <ToolButton aria-label="Close sensors"><CrossIcon /></ToolButton>
            </ToolGroup>
          </ToolBar>
        </MainFrame>
        <GraphColumn>
          {GRAPHS.map((g) => (
            <Graph key={g.title} data={g} />
          ))}
        </GraphColumn>
      </Page>
    </>
  );
}
